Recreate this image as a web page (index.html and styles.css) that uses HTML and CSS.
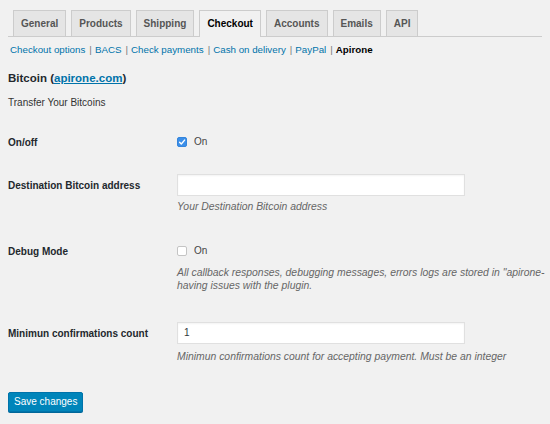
FILE: index.html
```html
<!DOCTYPE html>
<html lang="en">
<head>
<meta charset="utf-8">
<title>Checkout settings</title>
<link rel="stylesheet" href="styles.css">
</head>
<body>
<nav class="nav-tabs">
  <a class="nav-tab">General</a>
  <a class="nav-tab">Products</a>
  <a class="nav-tab">Shipping</a>
  <a class="nav-tab active">Checkout</a>
  <a class="nav-tab">Accounts</a>
  <a class="nav-tab">Emails</a>
  <a class="nav-tab">API</a>
</nav>
<ul class="subsubsub">
  <li><a href="#">Checkout options</a><span class="sep">|</span></li>
  <li><a href="#">BACS</a><span class="sep">|</span></li>
  <li><a href="#">Check payments</a><span class="sep">|</span></li>
  <li><a href="#">Cash on delivery</a><span class="sep">|</span></li>
  <li><a href="#">PayPal</a><span class="sep">|</span></li>
  <li><span class="current">Apirone</span></li>
</ul>
<h2 class="title">Bitcoin (<a href="#">apirone.com</a>)</h2>
<p class="intro">Transfer Your Bitcoins</p>
<div class="form">
  <div class="row row-check r1">
    <div class="label">On/off</div>
    <div class="field">
      <div class="check-line"><span class="cb checked"><svg viewBox="0 0 10 10" width="10" height="10"><path d="M2.6 5.2 L4.3 7 L7.6 3.1" fill="none" stroke="#fff" stroke-width="1.4" stroke-linecap="round" stroke-linejoin="round"/></svg></span>On</div>
    </div>
  </div>
  <div class="row row-input r2">
    <div class="label">Destination Bitcoin address</div>
    <div class="field">
      <div class="input"></div>
      <p class="desc d2">Your Destination Bitcoin address</p>
    </div>
  </div>
  <div class="row row-check r3">
    <div class="label">Debug Mode</div>
    <div class="field">
      <div class="check-line"><span class="cb"></span>On</div>
      <p class="desc d3"><span class="nowrap">All callback responses, debugging messages, errors logs are stored in "apirone-</span><br>having issues with the plugin.</p>
    </div>
  </div>
  <div class="row row-input r4">
    <div class="label">Minimun confirmations count</div>
    <div class="field">
      <div class="input">1</div>
      <p class="desc d4">Minimun confirmations count for accepting payment. Must be an integer</p>
    </div>
  </div>
</div>
<button class="button-primary">Save changes</button>
</body>
</html>
```
FILE: styles.css
```css
html, body {
  margin: 0;
  background: #f1f1f1;
  overflow: hidden;
}
body {
  padding: 0 8px;
  width: 534px;
  height: 424px;
  font-family: "Liberation Sans", Arial, sans-serif;
  font-size: 10px;
  color: #444;
}
.nav-tabs {
  display: flex;
  align-items: flex-end;
  gap: 5px;
  padding: 10px 0 0 5px;
  border-bottom: 1px solid #ccc;
}
.nav-tab {
  display: block;
  border: 1px solid #ccc;
  border-bottom: none;
  background: #e5e5e5;
  padding: 4px 7px;
  line-height: 17px;
  font-weight: bold;
  color: #555;
}
.nav-tab.active {
  background: #f1f1f1;
  color: #000;
  padding-bottom: 5px;
  margin-bottom: -1px;
}
.subsubsub {
  list-style: none;
  display: flex;
  margin: 5px 0 0;
  padding: 0 0 0 2px;
  font-size: 9.75px;
  line-height: 16px;
  color: #666;
}
.subsubsub a {
  color: #0073aa;
  text-decoration: none;
}
.sep {
  margin: 0 3px 0 4px;
  color: #777;
}
.current {
  color: #000;
  font-weight: bold;
}
.title {
  margin: 12px 0 0;
  font-size: 11.5px;
  line-height: 16px;
  color: #23282d;
}
.title a {
  color: #0073aa;
  text-decoration: underline;
}
.intro {
  margin: 10px 0 0;
  line-height: 14px;
  color: #333;
}
.row {
  display: grid;
  grid-template-columns: 169px 1fr;
}
.label {
  font-weight: bold;
  color: #23282d;
  padding-top: 1px;
  margin-bottom: -1px;
}
.row-check .label { line-height: 16px; }
.row-input .label { line-height: 22px; }
.r1 { margin-top: 24px; }
.r2 { margin-top: 24px; }
.r3 { margin-top: 29px; }
.r4 { margin-top: 30px; }
.check-line {
  line-height: 16px;
  color: #444;
  display: flex;
  align-items: center;
}
.cb {
  width: 10px;
  height: 10px;
  box-sizing: border-box;
  border: 1px solid #c4c4c4;
  border-radius: 2px;
  background: #fff;
  margin-right: 7px;
  display: block;
  position: relative;
}
.cb.checked {
  background: #3b8fe9;
  border-color: #3585dc;
}
.cb svg {
  position: absolute;
  left: -1px;
  top: -1px;
}
.input {
  width: 288px;
  height: 22px;
  box-sizing: border-box;
  border: 1px solid #e0e0e0;
  background: #fff;
  box-shadow: inset 0 1px 2px rgba(0,0,0,0.05);
  padding: 0 6px;
  line-height: 20px;
  color: #32373c;
}
.desc {
  margin: 0;
  font-style: italic;
  font-size: 10.4px;
  color: #666;
}
.d2 { margin-top: 4px; line-height: 14px; }
.d3 { margin-top: 7px; line-height: 13px; }
.d4 { margin-top: 6px; line-height: 14px; }
.nowrap { white-space: nowrap; }
.button-primary {
  display: block;
  margin: 28px 0 0;
  height: 20px;
  padding: 0 5px;
  box-sizing: border-box;
  background: #0085ba;
  border: 1px solid #0073aa;
  border-radius: 2px;
  box-shadow: 0 1px 0 #006799;
  color: #fff;
  font-family: "Liberation Sans", Arial, sans-serif;
  font-size: 10px;
  line-height: 18px;
}
```
